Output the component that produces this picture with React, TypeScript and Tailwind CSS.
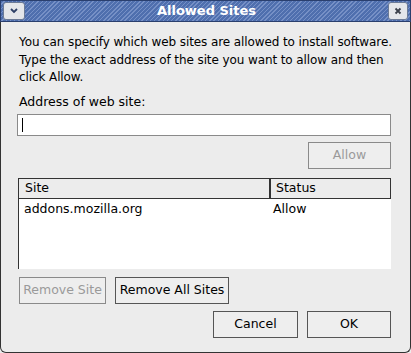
import React from "react";

function Btn({ children, disabled, className = "" }: { children: React.ReactNode; disabled?: boolean; className?: string }) {
  return (
    <div
      className={
        "flex h-[27px] items-center justify-center border bg-[#eeeeee] text-[12.5px] " +
        (disabled ? "border-[#8a8a8a] text-[#9a9a9a]" : "border-[#555555] text-black") +
        " " +
        className
      }
    >
      {children}
    </div>
  );
}

export default function App() {
  return (
    <div
      className="relative h-[353px] w-[411px] overflow-hidden bg-[#ececec] text-black"
      style={{ fontFamily: '"DejaVu Sans", "Liberation Sans", sans-serif' }}
    >
      {/* title bar */}
      <div className="flex h-[22px] items-center border border-[#2a3f6e] bg-[repeating-linear-gradient(135deg,#4f6fae_0px,#4f6fae_2px,#7690c6_2px,#7690c6_3px)] px-[2px]">
        <div className="flex h-[18px] w-[22px] items-center justify-center rounded-[3px] border border-[#6b7a96] bg-[#e4e6ea]">
          <svg width="10" height="8" viewBox="0 0 10 8">
            <path d="M2 2 L5 5 L8 2" stroke="#2d3f66" strokeWidth="1.8" fill="none" />
          </svg>
        </div>
        <div className="flex-1 text-center text-[13px] font-bold text-white">Allowed Sites</div>
        <div className="flex h-[18px] w-[20px] items-center justify-center rounded-[3px] border border-[#6b7a96] bg-[#e4e6ea]">
          <svg width="10" height="10" viewBox="0 0 10 10">
            <path d="M2.5 2.5 L7.5 7.5 M7.5 2.5 L2.5 7.5" stroke="#3a3f4a" strokeWidth="1.8" fill="none" />
          </svg>
        </div>
      </div>

      <div className="flex h-[331px] flex-col rounded-b-[6px] border-x border-b border-[#333333] px-[16px]">
        <p className="mt-[12px] whitespace-nowrap pl-[2px] text-[12px] leading-[17.5px] tracking-[-0.1px]">
          You can specify which web sites are allowed to install software.
          <br />
          Type the exact address of the site you want to allow and then
          <br />
          click Allow.
        </p>
        <div className="mt-[6px] pl-[2px] text-[12.5px] leading-[17px]">Address of web site:</div>
        <div className="mt-[4px] flex h-[22px] w-[374px] items-center border border-[#8a8a8a] bg-white pl-[4px]">
          <div className="h-[14px] w-[1px] bg-black" />
        </div>
        <div className="mt-[6px] flex justify-end pr-[3px]">
          <Btn disabled className="w-[83px]">Allow</Btn>
        </div>
        <div className="mt-[9px] ml-[1px] flex h-[91px] w-[373px] flex-col border-l border-t border-[#333333] border-b-[#ffffff] border-r-[#ffffff] bg-white">
          <div className="flex h-[20px] text-[12.5px]">
            <div className="flex w-[251px] items-center border-b border-r border-[#333333] bg-[#ececec] pl-[6px]">Site</div>
            <div className="flex flex-1 items-center border-b border-r border-l border-[#333333] bg-[#ececec] pl-[5px]">Status</div>
          </div>
          <div className="flex text-[12.5px] leading-[20px]">
            <div className="w-[253px] pl-[5px]">addons.mozilla.org</div>
            <div className="pl-[1px]">Allow</div>
          </div>
        </div>
        <div className="mt-[8px] flex gap-[9px] pl-[2px]">
          <Btn disabled className="w-[87px]">Remove Site</Btn>
          <Btn className="w-[114px]">Remove All Sites</Btn>
        </div>
        <div className="mt-[7px] flex justify-end gap-[9px] pr-[3px]">
          <Btn className="w-[85px]">Cancel</Btn>
          <Btn className="w-[84px]">OK</Btn>
        </div>
      </div>
    </div>
  );
}
